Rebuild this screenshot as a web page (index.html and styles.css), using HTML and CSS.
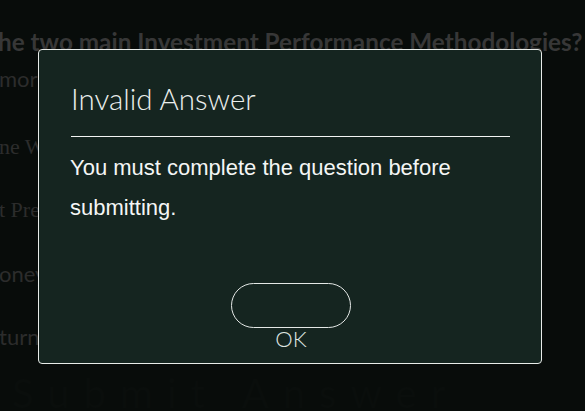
FILE: index.html
```html
<!DOCTYPE html>
<html lang="en">
<head>
<meta charset="utf-8">
<title>Invalid Answer</title>
<link rel="stylesheet" href="styles.css">
</head>
<body>
<div class="page">
  <h1 class="question">he two main Investment Performance Methodologies?</h1>
  <ul class="options">
    <li class="opt sans">more than one of the above</li>
    <li class="opt serif second">ne Weighted Return</li>
    <li class="opt serif">t Present Value</li>
    <li class="opt sans">oney Weighted Return</li>
    <li class="opt sans">turn on Investment</li>
  </ul>
  <div class="footer-faint">Submit Answer</div>
</div>
<div class="modal" role="dialog" aria-labelledby="mtitle">
  <h2 class="modal-title" id="mtitle">Invalid Answer</h2>
  <hr class="modal-rule">
  <p class="modal-body">You must complete the question before submitting.</p>
  <div class="modal-actions">
    <button class="ok-btn" type="button" aria-label="OK"></button>
    <span class="ok-label">OK</span>
  </div>
</div>
</body>
</html>
```

FILE: styles.css
```css
html, body {
  margin: 0;
  padding: 0;
}
body {
  background: #080c0a;
  width: 585px;
  height: 411px;
  overflow: hidden;
  position: relative;
  font-family: "Liberation Sans", Arial, sans-serif;
}
.page {
  display: flex;
  flex-direction: column;
  padding-top: 27px;
}
.question {
  margin: 0 0 0 -2px;
  font-family: Lato, "Open Sans", sans-serif;
  font-weight: 700;
  font-size: 24.3px;
  line-height: 30px;
  color: #373737;
  white-space: nowrap;
}
.options {
  list-style: none;
  margin: 0;
  padding: 0;
  display: flex;
  flex-direction: column;
  gap: 35.5px;
  margin-top: 8px;
}
.opt {
  font-size: 22px;
  line-height: 28px;
  color: #2c2c2c;
  white-space: nowrap;
  margin-left: -1px;
}
.opt.second {
  margin-top: 4px;
}
.opt.sans {
  font-family: Lato, sans-serif;
}
.opt.serif {
  font-family: "Liberation Serif", serif;
}
.footer-faint {
  margin-top: 22px;
  font-family: Lato, sans-serif;
  font-size: 40px;
  line-height: 40px;
  color: #0a0e0c;
  white-space: nowrap;
  padding-left: 12px;
  letter-spacing: 14px;
}
.modal {
  position: absolute;
  left: 38px;
  top: 49px;
  width: 504px;
  height: 315px;
  box-sizing: border-box;
  background: #152520;
  border: 1px solid #e8ece9;
  border-radius: 4px;
  padding: 31px 31px 0 32px;
  display: flex;
  flex-direction: column;
}
.modal-title {
  margin: 0;
  font-family: Lato, "Open Sans", sans-serif;
  font-weight: 300;
  font-size: 29.5px;
  line-height: 35px;
  color: #eaeeec;
}
.modal-rule {
  margin: 20px 0 0 0;
  border: 0;
  height: 1px;
  background: #f2f4f3;
}
.modal-body {
  margin: 11px 0 0 -1px;
  font-size: 22px;
  line-height: 40px;
  color: #f4f6f5;
}
.modal-actions {
  display: flex;
  flex-direction: column;
  align-items: center;
  margin-top: 55px;
  margin-left: 1px;
}
.ok-btn {
  width: 120px;
  height: 45px;
  box-sizing: border-box;
  background: transparent;
  border: 1.5px solid #e4e8e6;
  border-radius: 23px;
  padding: 0;
}
.ok-label {
  margin-top: -2px;
  font-family: Lato, "Open Sans", sans-serif;
  font-weight: 300;
  font-size: 22px;
  line-height: 26px;
  color: #dfe4e1;
}
```
